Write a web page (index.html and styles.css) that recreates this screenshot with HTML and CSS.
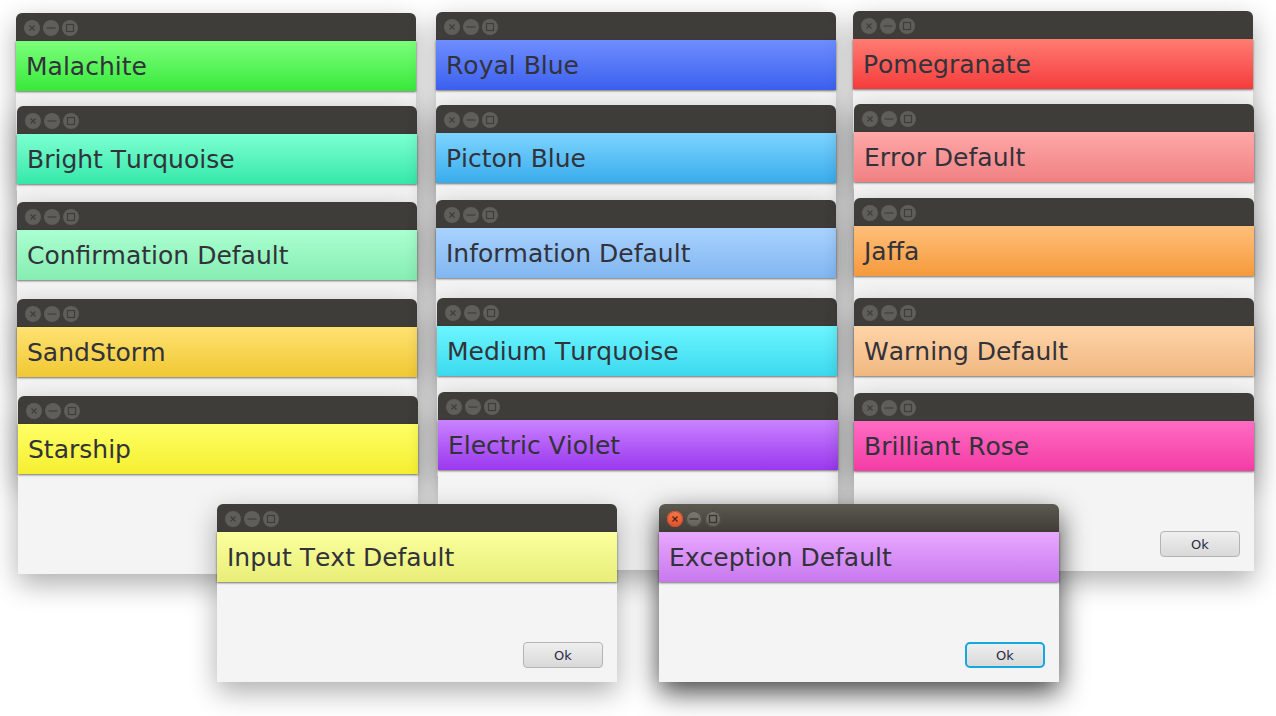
FILE: index.html
```html
<!DOCTYPE html>
<html lang="en">
<head>
<meta charset="utf-8">
<title>Notification dialogs</title>
<link rel="stylesheet" href="styles.css">
</head>
<body>
<main class="desktop">
  <section class="win w1"><div class="bar"><span class="tb"><svg viewBox="0 0 16 16"><path d="M5.5 5.5l5 5M10.5 5.5l-5 5"/></svg></span><span class="tb"><svg viewBox="0 0 16 16"><path d="M3.5 8h9"/></svg></span><span class="tb"><svg viewBox="0 0 16 16"><rect x="4.5" y="4.5" width="7" height="7"/></svg></span></div><h2 class="head">Malachite</h2><div class="body"><button class="ok">Ok</button></div></section>
  <section class="win w2"><div class="bar"><span class="tb"><svg viewBox="0 0 16 16"><path d="M5.5 5.5l5 5M10.5 5.5l-5 5"/></svg></span><span class="tb"><svg viewBox="0 0 16 16"><path d="M3.5 8h9"/></svg></span><span class="tb"><svg viewBox="0 0 16 16"><rect x="4.5" y="4.5" width="7" height="7"/></svg></span></div><h2 class="head">Bright Turquoise</h2><div class="body"><button class="ok">Ok</button></div></section>
  <section class="win w3"><div class="bar"><span class="tb"><svg viewBox="0 0 16 16"><path d="M5.5 5.5l5 5M10.5 5.5l-5 5"/></svg></span><span class="tb"><svg viewBox="0 0 16 16"><path d="M3.5 8h9"/></svg></span><span class="tb"><svg viewBox="0 0 16 16"><rect x="4.5" y="4.5" width="7" height="7"/></svg></span></div><h2 class="head">Confirmation Default</h2><div class="body"><button class="ok">Ok</button></div></section>
  <section class="win w4"><div class="bar"><span class="tb"><svg viewBox="0 0 16 16"><path d="M5.5 5.5l5 5M10.5 5.5l-5 5"/></svg></span><span class="tb"><svg viewBox="0 0 16 16"><path d="M3.5 8h9"/></svg></span><span class="tb"><svg viewBox="0 0 16 16"><rect x="4.5" y="4.5" width="7" height="7"/></svg></span></div><h2 class="head">SandStorm</h2><div class="body"><button class="ok">Ok</button></div></section>
  <section class="win w5"><div class="bar"><span class="tb"><svg viewBox="0 0 16 16"><path d="M5.5 5.5l5 5M10.5 5.5l-5 5"/></svg></span><span class="tb"><svg viewBox="0 0 16 16"><path d="M3.5 8h9"/></svg></span><span class="tb"><svg viewBox="0 0 16 16"><rect x="4.5" y="4.5" width="7" height="7"/></svg></span></div><h2 class="head">Starship</h2><div class="body"><button class="ok">Ok</button></div></section>

  <section class="win w6"><div class="bar"><span class="tb"><svg viewBox="0 0 16 16"><path d="M5.5 5.5l5 5M10.5 5.5l-5 5"/></svg></span><span class="tb"><svg viewBox="0 0 16 16"><path d="M3.5 8h9"/></svg></span><span class="tb"><svg viewBox="0 0 16 16"><rect x="4.5" y="4.5" width="7" height="7"/></svg></span></div><h2 class="head">Royal Blue</h2><div class="body"><button class="ok">Ok</button></div></section>
  <section class="win w7"><div class="bar"><span class="tb"><svg viewBox="0 0 16 16"><path d="M5.5 5.5l5 5M10.5 5.5l-5 5"/></svg></span><span class="tb"><svg viewBox="0 0 16 16"><path d="M3.5 8h9"/></svg></span><span class="tb"><svg viewBox="0 0 16 16"><rect x="4.5" y="4.5" width="7" height="7"/></svg></span></div><h2 class="head">Picton Blue</h2><div class="body"><button class="ok">Ok</button></div></section>
  <section class="win w8"><div class="bar"><span class="tb"><svg viewBox="0 0 16 16"><path d="M5.5 5.5l5 5M10.5 5.5l-5 5"/></svg></span><span class="tb"><svg viewBox="0 0 16 16"><path d="M3.5 8h9"/></svg></span><span class="tb"><svg viewBox="0 0 16 16"><rect x="4.5" y="4.5" width="7" height="7"/></svg></span></div><h2 class="head">Information Default</h2><div class="body"><button class="ok">Ok</button></div></section>
  <section class="win w9"><div class="bar"><span class="tb"><svg viewBox="0 0 16 16"><path d="M5.5 5.5l5 5M10.5 5.5l-5 5"/></svg></span><span class="tb"><svg viewBox="0 0 16 16"><path d="M3.5 8h9"/></svg></span><span class="tb"><svg viewBox="0 0 16 16"><rect x="4.5" y="4.5" width="7" height="7"/></svg></span></div><h2 class="head">Medium Turquoise</h2><div class="body"><button class="ok">Ok</button></div></section>
  <section class="win w10"><div class="bar"><span class="tb"><svg viewBox="0 0 16 16"><path d="M5.5 5.5l5 5M10.5 5.5l-5 5"/></svg></span><span class="tb"><svg viewBox="0 0 16 16"><path d="M3.5 8h9"/></svg></span><span class="tb"><svg viewBox="0 0 16 16"><rect x="4.5" y="4.5" width="7" height="7"/></svg></span></div><h2 class="head">Electric Violet</h2><div class="body"><button class="ok">Ok</button></div></section>

  <section class="win w11"><div class="bar"><span class="tb"><svg viewBox="0 0 16 16"><path d="M5.5 5.5l5 5M10.5 5.5l-5 5"/></svg></span><span class="tb"><svg viewBox="0 0 16 16"><path d="M3.5 8h9"/></svg></span><span class="tb"><svg viewBox="0 0 16 16"><rect x="4.5" y="4.5" width="7" height="7"/></svg></span></div><h2 class="head">Pomegranate</h2><div class="body"><button class="ok">Ok</button></div></section>
  <section class="win w12"><div class="bar"><span class="tb"><svg viewBox="0 0 16 16"><path d="M5.5 5.5l5 5M10.5 5.5l-5 5"/></svg></span><span class="tb"><svg viewBox="0 0 16 16"><path d="M3.5 8h9"/></svg></span><span class="tb"><svg viewBox="0 0 16 16"><rect x="4.5" y="4.5" width="7" height="7"/></svg></span></div><h2 class="head">Error Default</h2><div class="body"><button class="ok">Ok</button></div></section>
  <section class="win w13"><div class="bar"><span class="tb"><svg viewBox="0 0 16 16"><path d="M5.5 5.5l5 5M10.5 5.5l-5 5"/></svg></span><span class="tb"><svg viewBox="0 0 16 16"><path d="M3.5 8h9"/></svg></span><span class="tb"><svg viewBox="0 0 16 16"><rect x="4.5" y="4.5" width="7" height="7"/></svg></span></div><h2 class="head">Jaffa</h2><div class="body"><button class="ok">Ok</button></div></section>
  <section class="win w14"><div class="bar"><span class="tb"><svg viewBox="0 0 16 16"><path d="M5.5 5.5l5 5M10.5 5.5l-5 5"/></svg></span><span class="tb"><svg viewBox="0 0 16 16"><path d="M3.5 8h9"/></svg></span><span class="tb"><svg viewBox="0 0 16 16"><rect x="4.5" y="4.5" width="7" height="7"/></svg></span></div><h2 class="head">Warning Default</h2><div class="body"><button class="ok">Ok</button></div></section>
  <section class="win w15"><div class="bar"><span class="tb"><svg viewBox="0 0 16 16"><path d="M5.5 5.5l5 5M10.5 5.5l-5 5"/></svg></span><span class="tb"><svg viewBox="0 0 16 16"><path d="M3.5 8h9"/></svg></span><span class="tb"><svg viewBox="0 0 16 16"><rect x="4.5" y="4.5" width="7" height="7"/></svg></span></div><h2 class="head">Brilliant Rose</h2><div class="body"><button class="ok">Ok</button></div></section>

  <section class="win w16"><div class="bar"><span class="tb"><svg viewBox="0 0 16 16"><path d="M5.5 5.5l5 5M10.5 5.5l-5 5"/></svg></span><span class="tb"><svg viewBox="0 0 16 16"><path d="M3.5 8h9"/></svg></span><span class="tb"><svg viewBox="0 0 16 16"><rect x="4.5" y="4.5" width="7" height="7"/></svg></span></div><h2 class="head">Input Text Default</h2><div class="body"><button class="ok">Ok</button></div></section>
  <section class="win w17 focused"><div class="bar"><span class="tb close"><svg viewBox="0 0 16 16"><path d="M5.5 5.5l5 5M10.5 5.5l-5 5"/></svg></span><span class="tb"><svg viewBox="0 0 16 16"><path d="M3.5 8h9"/></svg></span><span class="tb"><svg viewBox="0 0 16 16"><rect x="4.5" y="4.5" width="7" height="7"/></svg></span></div><h2 class="head">Exception Default</h2><div class="body"><button class="ok">Ok</button></div></section>
</main>
</body>
</html>
```
FILE: styles.css
```css
* { box-sizing: border-box; }
html, body { margin: 0; padding: 0; background: #fff; }
body { width: 1276px; height: 716px; overflow: hidden; font-family: "DejaVu Sans", sans-serif; font-kerning: none; }
.desktop { position: relative; width: 1276px; height: 716px; overflow: hidden; }

.win {
  position: absolute;
  width: 400px;
  height: 178px;
  display: flex;
  flex-direction: column;
  background: #f4f4f4;
  border-radius: 6px 6px 0 0;
  box-shadow: 0 10px 28px rgba(0, 0, 0, .32);
}
.bar {
  flex: 0 0 28px;
  display: flex;
  align-items: center;
  gap: 3px;
  padding: 1px 0 0 7.5px;
  background: #3f3d39;
  border-radius: 6px 6px 0 0;
}
.tb {
  width: 16px;
  height: 16px;
  border-radius: 50%;
  background: #5f5e5a;
  display: block;
}
.tb svg { display: block; width: 16px; height: 16px; fill: none; stroke: #403e3a; stroke-width: 1.2; }
.head {
  flex: 0 0 50px;
  margin: 0;
  padding-left: 10px;
  display: flex;
  align-items: center;
  font-size: 25px;
  font-weight: 400;
  color: #32323a;
  background: linear-gradient(var(--top), var(--bot));
  box-shadow: 0 1px 2px rgba(0, 0, 0, .55);
  position: relative;
}
.body {
  flex: 1;
  display: flex;
  justify-content: flex-end;
  align-items: flex-end;
  padding: 0 14px 14px;
}
.ok {
  width: 80px;
  height: 26px;
  padding: 0;
  font: 13px "DejaVu Sans", sans-serif;
  font-kerning: none;
  color: #2a2a40;
  background: linear-gradient(#efefef, #d9d9d9);
  border: 1px solid #b4b4b4;
  border-radius: 4px;
}

.focused { box-shadow: 0 10px 28px rgba(0, 0, 0, .75); }
.focused .bar { background: linear-gradient(#5c594f, #3f3d37); }
.focused .tb { background: linear-gradient(#7a7972, #63625c); box-shadow: inset 0 0 0 1px #4a4943; }
.focused .tb svg { stroke: #38362f; stroke-width: 1.4; }
.focused .tb.close { background: linear-gradient(#f27a4e, #e0502a); box-shadow: inset 0 0 0 1px #c8502a; }
.focused .tb.close svg { stroke: #5a2414; }
.focused .ok { border: 2px solid #16a6e0; border-radius: 5px; }

.w1  { left: 16px;  top: 13px;  --top: #7cff7c; --bot: #38e93a; }
.w2  { left: 17px;  top: 106px; --top: #7dffd2; --bot: #36e8aa; }
.w3  { left: 17px;  top: 202px; --top: #aaffd0; --bot: #86edb2; }
.w4  { left: 17px;  top: 299px; --top: #ffe272; --bot: #f0c832; }
.w5  { left: 18px;  top: 396px; --top: #ffff66; --bot: #f5ef30; }
.w6  { left: 436px; top: 12px;  --top: #6e8eff; --bot: #3c60ef; }
.w7  { left: 436px; top: 105px; --top: #7ed4ff; --bot: #38acec; }
.w8  { left: 436px; top: 200px; --top: #a9d2ff; --bot: #80b6f0; }
.w9  { left: 437px; top: 298px; --top: #6cf5ff; --bot: #3cd9ee; }
.w10 { left: 438px; top: 392px; --top: #ca82ff; --bot: #9a38ee; }
.w11 { left: 853px; top: 11px;  --top: #ff7c72; --bot: #f53c3c; }
.w12 { left: 854px; top: 104px; --top: #ffa8a8; --bot: #f08082; }
.w13 { left: 854px; top: 198px; --top: #ffbf7a; --bot: #f59a3c; }
.w14 { left: 854px; top: 298px; --top: #ffd3a8; --bot: #f0b880; }
.w15 { left: 854px; top: 393px; --top: #ff6cc2; --bot: #f43ca6; }
.w16 { left: 217px; top: 504px; --top: #fbff9e; --bot: #e8ee78; }
.w17 { left: 659px; top: 504px; --top: #e8a8ff; --bot: #c878ee; }
```
